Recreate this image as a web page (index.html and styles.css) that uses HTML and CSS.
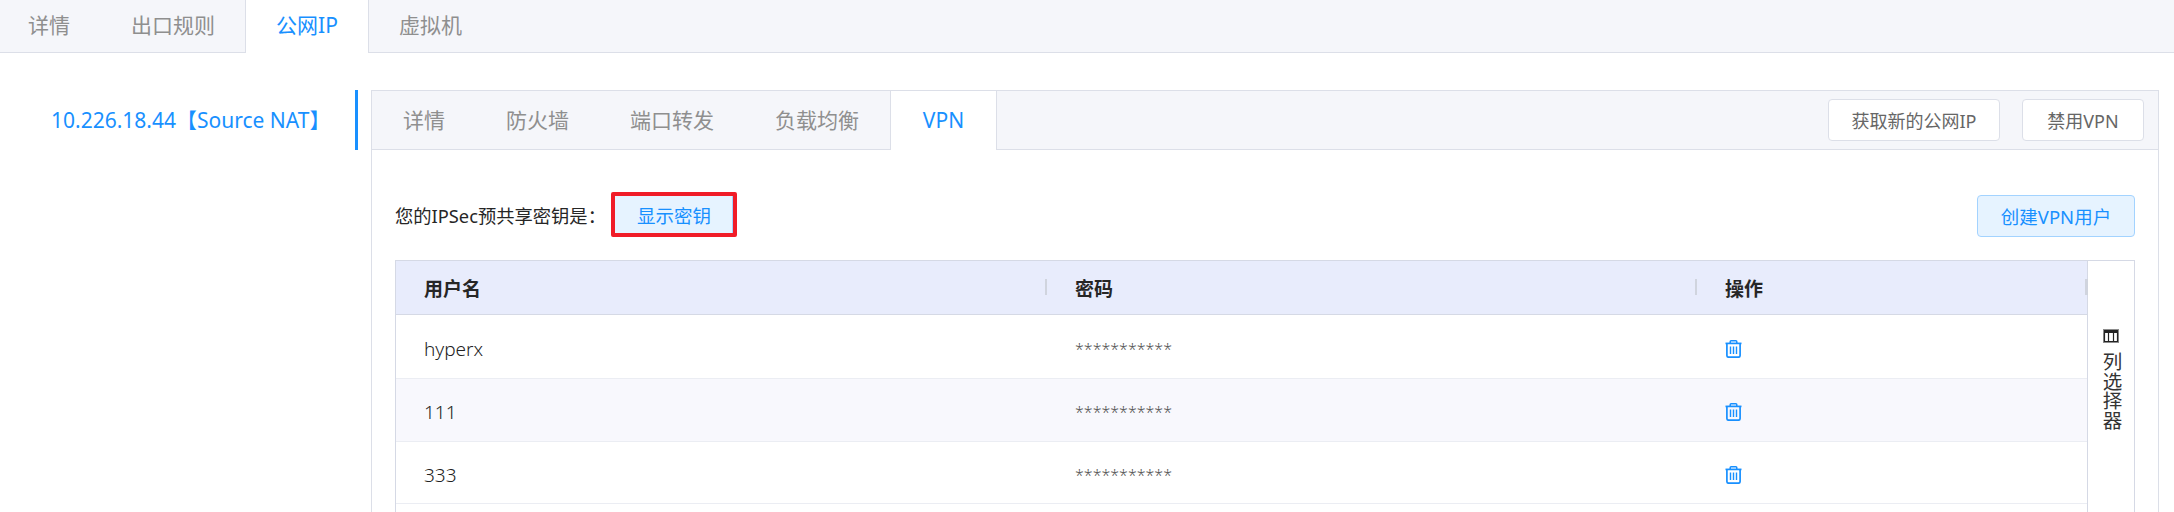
FILE: index.html
```html
<!doctype html>
<html lang="zh-CN">
<head>
    <meta charset="utf-8">
    <meta name="viewport" content="width=device-width, initial-scale=1">
    <title>公网IP - VPN</title>
    <link rel="stylesheet" href="styles.css">
</head>
<body>
<div class="page-tabs">
    <a class="tab">详情</a>
    <a class="tab">出口规则</a>
    <a class="tab active">公网IP</a>
    <a class="tab">虚拟机</a>
</div>

<div class="main">
    <div class="ip-list">
        <div class="ip-item">10.226.18.44【Source NAT】</div>
    </div>

    <div class="card">
        <div class="card-tabs">
            <a class="tab">详情</a>
            <a class="tab">防火墙</a>
            <a class="tab">端口转发</a>
            <a class="tab">负载均衡</a>
            <a class="tab active">VPN</a>
            <div class="card-actions">
                <button class="btn btn-new-ip">获取新的公网IP</button>
                <button class="btn btn-disable">禁用VPN</button>
            </div>
        </div>

        <div class="card-body">
            <div class="toolbar">
                <span class="psk-label">您的IPSec预共享密钥是：</span>
                <button class="btn-show">显示密钥</button>
                <button class="btn btn-primary">创建VPN用户</button>
            </div>

            <div class="table-wrap">
                <table class="user-table">
                    <colgroup>
                        <col class="col-name">
                        <col class="col-pass">
                        <col>
                    </colgroup>
                    <thead>
                    <tr>
                        <th>用户名</th>
                        <th>密码</th>
                        <th>操作</th>
                    </tr>
                    </thead>
                    <tbody>
                    <tr class="row-1">
                        <td>hyperx</td>
                        <td class="pass">***********</td>
                        <td><svg class="trash" viewBox="0 0 17 18"><use href="#trash"></use></svg></td>
                    </tr>
                    <tr class="row-2">
                        <td>111</td>
                        <td class="pass">***********</td>
                        <td><svg class="trash" viewBox="0 0 17 18"><use href="#trash"></use></svg></td>
                    </tr>
                    <tr class="row-3">
                        <td>333</td>
                        <td class="pass">***********</td>
                        <td><svg class="trash" viewBox="0 0 17 18"><use href="#trash"></use></svg></td>
                    </tr>
                    </tbody>
                </table>

                <div class="col-picker">
                    <svg class="col-icon" viewBox="0 0 16 14">
                        <rect x="0.5" y="0.5" width="15" height="13" fill="none" stroke="#8c8c8c"/>
                        <rect x="1" y="1" width="14" height="3" fill="#222"/>
                        <path d="M1.5 4v8.5h13V4M5.5 4v9M10.5 4v9" fill="none" stroke="#222" stroke-width="1.2"/>
                    </svg>
                    <span class="col-text">列选择器</span>
                </div>
            </div>
        </div>
    </div>
</div>

<svg class="sprite">
    <symbol id="trash" viewBox="0 0 17 18">
        <path d="M5.2 3V1.7c0-.5.4-.9.9-.9h4.8c.5 0 .9.4.9.9V3" fill="none" stroke="#1890ff" stroke-width="1.5"/>
        <path d="M0.5 3.4h16" fill="none" stroke="#1890ff" stroke-width="1.7"/>
        <path d="M1.9 3.4v12.2c0 1 .7 1.6 1.7 1.6h9.8c1 0 1.7-.6 1.7-1.6V3.4" fill="none" stroke="#1890ff" stroke-width="1.7"/>
        <path d="M5.5 6.5v7.5M8.5 6.5v7.5M11.5 6.5v7.5" fill="none" stroke="#1890ff" stroke-width="1.4"/>
    </symbol>
</svg>
</body>
</html>
```

FILE: styles.css
```css
html, body {
    height: 512px;
    overflow: hidden;
}

body {
    margin: 0;
    display: flex;
    flex-direction: column;
    background: #fff;
    font-family: "Noto Sans", "Noto Sans CJK SC", sans-serif;
    font-size: 18px;
    color: #333;
}

.sprite {
    display: none;
}

/* tabs */
.page-tabs {
    display: flex;
    flex: none;
    height: 52px;
    margin-left: -2px;
    background: #f5f6fa;
    border-bottom: 1px solid #dcdfe8;
}

.tab {
    box-sizing: border-box;
    height: 100%;
    padding: 0 30px;
    font-size: 21px;
    line-height: 50px;
    color: #8f8f8f;
    border-left: 1px solid transparent;
    border-right: 1px solid transparent;
    margin-left: -1px;
}

.tab.active {
    height: calc(100% + 1px);
    background: #fff;
    color: #1890ff;
    border-left-color: #dcdfe8;
    border-right-color: #dcdfe8;
}

.page-tabs .tab.active {
    width: 124px;
    padding: 0;
    margin-left: -1px;
    text-align: center;
}

/* layout */
.main {
    display: flex;
    flex: 1;
    min-height: 0;
    padding: 37px 15px 0 0;
}

.ip-list {
    flex: none;
    width: 358px;
    margin-right: 13px;
}

.ip-item {
    box-sizing: border-box;
    height: 60px;
    padding-left: 51px;
    font-size: 21px;
    line-height: 60px;
    color: #1890ff;
    border-right: 3px solid #1890ff;
    white-space: nowrap;
}

.card {
    flex: 1;
    min-width: 0;
    display: flex;
    flex-direction: column;
    border: 1px solid #dcdfe8;
    border-bottom: 0;
}

.card-tabs {
    display: flex;
    align-items: flex-start;
    flex: none;
    height: 58px;
    background: #f5f6fa;
    border-bottom: 1px solid #dcdfe8;
}

.card-tabs .tab {
    line-height: 58px;
}

.card-tabs .tab:first-child {
    margin-left: 0;
}

.card-tabs .tab.active {
    width: 107px;
    padding: 0;
    margin-left: 0;
    text-align: center;
}

.card-actions {
    display: flex;
    gap: 22px;
    margin: 8px 14px 0 auto;
}

/* buttons */
.btn {
    box-sizing: border-box;
    height: 42px;
    padding: 0;
    font: inherit;
    color: #666;
    background: #fff;
    border: 1px solid #dcdfe8;
    border-radius: 4px;
}

.btn-new-ip {
    width: 172px;
}

.btn-disable {
    width: 122px;
}

.btn-primary {
    width: 158px;
    margin-left: auto;
    font-size: 18.5px;
    color: #1890ff;
    background: #e6f3ff;
    border-color: #a3d3ff;
}

.btn-show {
    box-sizing: border-box;
    width: 126px;
    height: 45px;
    padding: 0;
    font: inherit;
    font-size: 18.5px;
    color: #1890ff;
    background: #e6f3ff;
    border: 4px solid #f01c28;
    border-radius: 2px;
    box-shadow: inset -1px 0 0 #a3d3ff;
}

/* body */
.card-body {
    flex: 1;
    min-height: 0;
    display: flex;
    flex-direction: column;
    padding: 42px 23px 0 23px;
}

.toolbar {
    display: flex;
    align-items: center;
    flex: none;
    height: 45px;
    margin-bottom: 23px;
}

.psk-label {
    width: 216px;
    font-size: 18.3px;
    color: #262626;
    white-space: nowrap;
}

.toolbar .btn-primary {
    align-self: flex-end;
}

.table-wrap {
    display: flex;
    flex: 1;
    min-height: 0;
    border-top: 1px solid #d5d9e5;
    border-left: 1px solid #d5d9e5;
}

/* table */
.user-table {
    flex: 1;
    align-self: flex-start;
    min-width: 0;
    table-layout: fixed;
    border-collapse: separate;
    border-spacing: 0;
}

.col-name {
    width: 651px;
}

.col-pass {
    width: 650px;
}

.user-table th {
    position: relative;
    height: 53px;
    padding: 0 0 0 28px;
    font-size: 19px;
    font-weight: 700;
    text-align: left;
    color: #262626;
    background: #e8ecfc;
    border-bottom: 1px solid #d5d9e5;
}

.user-table th::after {
    content: "";
    position: absolute;
    top: 18px;
    right: -1px;
    width: 3px;
    height: 16px;
    background: #d0d4de;
}

.user-table td {
    padding: 4px 0 0 28px;
    font-size: 19px;
    font-weight: 300;
    color: #222;
    border-bottom: 1px solid #ebedf3;
}

.row-1 td {
    height: 59px;
}

.row-2 td {
    height: 58px;
    background: #f8f8fd;
}

.row-3 td {
    height: 57px;
}

.user-table .pass {
    font-size: 16px;
    color: #555;
}

.trash {
    display: block;
    width: 17px;
    height: 18px;
}

/* column picker */
.col-picker {
    flex: none;
    box-sizing: border-box;
    width: 48px;
    display: flex;
    flex-direction: column;
    align-items: center;
    padding-top: 68px;
    background: #fff;
    border-left: 1px solid #d5d9e5;
    border-right: 1px solid #d5d9e5;
}

.col-icon {
    width: 16px;
    height: 14px;
    margin-bottom: 9px;
}

.col-text {
    writing-mode: vertical-rl;
    font-size: 19.5px;
    line-height: 20px;
    color: #333;
}
```
